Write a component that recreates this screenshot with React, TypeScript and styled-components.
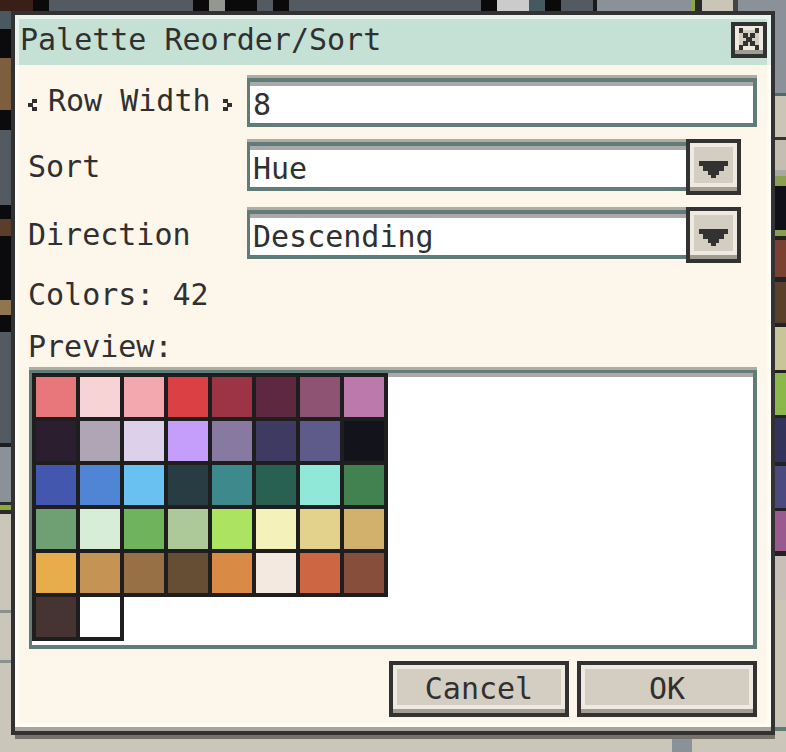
import React from "react";
import styled, { createGlobalStyle, css } from "styled-components";

const GlobalStyle = createGlobalStyle`
  html, body {
    margin: 0;
    padding: 0;
    background: #cbc6ba;
  }
  body {
    font-family: "DejaVu Sans Mono", "Liberation Mono", monospace;
  }
`;

// the app behind the dialog
const Desktop = styled.div`
  width: 786px;
  height: 752px;
  overflow: hidden;
  display: grid;
  grid-template-columns: 11px 764px 11px;
  grid-template-rows: 11px 728px 13px;
  grid-template-areas:
    "top top top"
    "left dlg right"
    "left bottom right";
  background: #cbc6ba;
`;

const Strip = styled.div<{ $area: string; $dir: "row" | "column" }>`
  grid-area: ${(p) => p.$area};
  display: flex;
  flex-direction: ${(p) => p.$dir};
  overflow: hidden;
`;

const Block = styled.div<{ $size: number; $color: string }>`
  flex: ${(p) => (p.$size > 0 ? `0 0 ${p.$size}px` : "1 1 auto")};
  background: ${(p) => p.$color};
`;

type Seg = [number, string];

const topSegs: Seg[] = [
  [33, "#3a1f18"], [16, "#0a0a0a"], [144, "#535a62"], [16, "#0a0a0a"],
  [16, "#949791"], [32, "#0a0a0a"], [16, "#535a62"], [16, "#0a0a0a"],
  [192, "#535a62"], [16, "#0a0a0a"], [32, "#cbcbcb"], [16, "#455a60"],
  [16, "#0a0a0a"], [32, "#535a62"], [4, "#1a1a1a"], [94, "#8a9199"],
  [4, "#8aaa40"], [7, "#2a2a2a"], [31, "#cbc5b8"], [5, "#444444"],
  [0, "#8a9199"],
];

const leftSegs: Seg[] = [
  [18, "#4a5860"], [29, "#0b0b0d"], [52, "#7d5e3e"], [20, "#0b0b0d"],
  [75, "#535a62"], [14, "#0b0b0d"], [17, "#5b3d2c"], [64, "#0b0b0d"],
  [15, "#8f7550"], [17, "#0b0b0d"], [111, "#535a62"], [4, "#1e1e1e"],
  [55, "#8a9199"], [3, "#2a2a2a"], [5, "#8aaa40"], [4, "#2a2a2a"],
  [96, "#cbc6ba"], [3, "#8a9190"], [47, "#cbc6ba"], [3, "#8a9190"],
  [0, "#cbc6ba"],
];

const rightSegs: Seg[] = [
  [82, "#8a9199"], [3, "#4a6a6a"], [41, "#cbc5b8"], [3, "#333333"],
  [30, "#c4beb2"], [6, "#a8a8a0"], [10, "#8aa050"], [44, "#101018"],
  [6, "#8aa050"], [4, "#222222"], [37, "#7a4030"], [5, "#222222"],
  [41, "#5a3f2a"], [4, "#222222"], [43, "#c8c59a"], [3, "#222222"],
  [42, "#8ab84a"], [3, "#222222"], [44, "#33325a"], [4, "#222222"],
  [42, "#4a4a80"], [3, "#222222"], [40, "#9a5a90"], [5, "#222222"],
  [44, "#c8c0b8"], [127, "#cbc5b8"], [4, "#5f7c79"], [0, "#cbc6ba"],
];

const bottomSegs: Seg[] = [
  [661, "#cbc6ba"], [20, "#8a9199"], [0, "#cbc6ba"],
];

// dialog chrome
const bevel = css`
  box-sizing: border-box;
  background: #d4cdc1;
  border: 4px solid #323232;
  box-shadow: inset 0 -4px 0 #a39c90, inset 0 -8px 0 #eeeae2,
    inset 4px 4px 0 #eeeae2, inset -4px 0 0 #eeeae2;
`;

const Dialog = styled.div`
  grid-area: dlg;
  height: 724px;
  box-sizing: border-box;
  border: 4px solid #323232;
  box-shadow: 4px 4px 0 #77736c;
  display: flex;
  flex-direction: column;
  color: #303030;
  font-family: "DejaVu Sans Mono", "Liberation Mono", monospace;
  font-size: 30px;
`;

const TitleBar = styled.div`
  flex: none;
  height: 50px;
  box-sizing: border-box;
  padding: 0 4px 0 5px;
  background: #c5e0d4;
  box-shadow: inset 4px 4px 0 #e9f3ee, inset -4px 0 0 #e9f3ee;
  display: flex;
  align-items: center;
  justify-content: space-between;
`;

const Title = styled.span`
  line-height: 40px;
  white-space: pre;
`;

const CloseButton = styled.div`
  ${bevel};
  width: 36px;
  height: 36px;
  display: flex;
  align-items: center;
  justify-content: center;
  padding-bottom: 2px;
`;

const Body = styled.div`
  flex: 1;
  box-sizing: border-box;
  padding: 10px 14px 14px 13px;
  background: #fdf6ea;
  box-shadow: inset 0 -4px 0 #a8a39a, inset 0 -8px 0 #fffcf6,
    inset 4px 0 0 #fffcf6, inset -4px 0 0 #fffcf6;
  display: flex;
  flex-direction: column;
  gap: 12px;
`;

const FormRow = styled.div`
  display: grid;
  grid-template-columns: 219px 1fr;
  align-items: center;
`;

const Label = styled.div`
  line-height: 40px;
  white-space: pre;
`;

const StepLabel = styled.div`
  display: flex;
  align-items: center;
  line-height: 40px;
  white-space: pre;
`;

const StepArrow = styled.svg<{ $gap: "left" | "right" }>`
  flex: none;
  margin-top: 8px;
  ${(p) => (p.$gap === "left" ? "margin-right: 11px;" : "margin-left: 12px;")}
`;

const Field = styled.div<{ $width?: number }>`
  box-sizing: border-box;
  height: 52px;
  border-top: 3px solid #b2aba0;
`;

const FieldBox = styled.div<{ $closed: boolean }>`
  box-sizing: border-box;
  height: 49px;
  padding: 4px 0 0 3px;
  background: #ffffff;
  border: 4px solid #5f7c79;
  border-left-width: 3px;
  border-right-width: ${(p) => (p.$closed ? 4 : 0)}px;
  box-shadow: inset 0 4px 0 #a9a9a9;
  line-height: 37px;
  white-space: pre;
`;

const Select = styled.div`
  width: 494px;
  display: grid;
  grid-template-columns: 1fr 55px;
  align-items: start;
`;

const DropButton = styled.div`
  ${bevel};
  height: 56px;
  padding-top: 4px;
  display: flex;
  align-items: center;
  justify-content: center;
`;

const PreviewSection = styled.div`
  display: flex;
  flex-direction: column;
`;

const PreviewBox = styled.div`
  box-sizing: border-box;
  height: 282px;
  margin-left: 1px;
  border-top: 3px solid #b2aba0;
`;

const PreviewInner = styled.div`
  box-sizing: border-box;
  height: 279px;
  background: #ffffff;
  border: 4px solid #5f7c79;
  border-top-width: 3px;
  border-left-width: 3px;
  box-shadow: inset 0 4px 0 #a9a9a9;
`;

const SwatchGrid = styled.div`
  width: fit-content;
  padding: 4px;
  display: grid;
  grid-template-columns: repeat(8, 40px);
  grid-auto-rows: 40px;
  gap: 4px;
`;

const Swatch = styled.div<{ $color: string }>`
  background: ${(p) => p.$color};
  box-shadow: 0 0 0 4px #1e1e1e;
`;

const Footer = styled.div`
  display: flex;
  justify-content: flex-end;
  gap: 8px;
`;

const Button = styled.div`
  ${bevel};
  width: 180px;
  height: 56px;
  line-height: 48px;
  text-align: center;
`;

const palette = [
  "#e8777b", "#f7d3d6", "#f3a7ae", "#da4044", "#9c3446", "#5e2940", "#8e5273", "#bc79ac",
  "#2a1e2f", "#afa5b5", "#ddd0ea", "#c59dfb", "#8879a0", "#3e3a61", "#5e5b8a", "#13131c",
  "#4357af", "#5085d6", "#69c1f2", "#273d43", "#3e898b", "#286052", "#90e8d8", "#428250",
  "#6ea074", "#d8edd8", "#6fb45d", "#adc99a", "#ace462", "#f4f1bb", "#e3d28b", "#d2b16d",
  "#e7ac4b", "#c59354", "#987045", "#664e35", "#d98a44", "#f4e9e0", "#cd6642", "#884e3c",
  "#463432", "#ffffff",
];

function CloseGlyph() {
  return (
    <svg width="20" height="22" viewBox="0 0 20 22" fill="#323232">
      <rect x="0" y="0" width="4" height="5" />
      <rect x="16" y="0" width="4" height="5" />
      <rect x="4" y="5" width="5" height="5" />
      <rect x="11" y="5" width="5" height="5" />
      <rect x="7" y="9" width="6" height="5" />
      <rect x="4" y="13" width="5" height="5" />
      <rect x="11" y="13" width="5" height="5" />
      <rect x="0" y="17" width="4" height="5" />
      <rect x="16" y="17" width="4" height="5" />
    </svg>
  );
}

function DownArrow() {
  return (
    <svg width="29" height="17" viewBox="0 0 29 17" fill="#323232">
      <rect x="0" y="0" width="29" height="5" />
      <rect x="4" y="5" width="21" height="5" />
      <rect x="9" y="10" width="11" height="4" />
      <rect x="12" y="14" width="5" height="3" />
    </svg>
  );
}

function Chevron({ side }: { side: "left" | "right" }) {
  const pts =
    side === "left"
      ? [[4, 0], [0, 4], [4, 8]]
      : [[0, 0], [4, 4], [0, 8]];
  return (
    <StepArrow $gap={side} width="9" height="12" viewBox="0 0 9 12" fill="#303030">
      {pts.map(([x, y]) => (
        <rect key={`${x}-${y}`} x={x} y={y} width="5" height="4" />
      ))}
    </StepArrow>
  );
}

function Dropdown({ value }: { value: string }) {
  return (
    <Select>
      <Field>
        <FieldBox $closed={false}>{value}</FieldBox>
      </Field>
      <DropButton>
        <DownArrow />
      </DropButton>
    </Select>
  );
}

function Strips({ area, dir, segs }: { area: string; dir: "row" | "column"; segs: Seg[] }) {
  return (
    <Strip $area={area} $dir={dir}>
      {segs.map(([size, color], i) => (
        <Block key={i} $size={size} $color={color} />
      ))}
    </Strip>
  );
}

export default function App() {
  return (
    <>
      <GlobalStyle />
      <Desktop>
        <Strips area="top" dir="row" segs={topSegs} />
        <Strips area="left" dir="column" segs={leftSegs} />
        <Dialog>
          <TitleBar>
            <Title>Palette Reorder/Sort</Title>
            <CloseButton>
              <CloseGlyph />
            </CloseButton>
          </TitleBar>
          <Body>
            <FormRow>
              <StepLabel>
                <Chevron side="left" />
                Row Width
                <Chevron side="right" />
              </StepLabel>
              <Field>
                <FieldBox $closed>8</FieldBox>
              </Field>
            </FormRow>
            <FormRow>
              <Label>Sort</Label>
              <Dropdown value="Hue" />
            </FormRow>
            <FormRow>
              <Label>Direction</Label>
              <Dropdown value="Descending" />
            </FormRow>
            <Label>Colors: 42</Label>
            <PreviewSection>
              <Label>Preview:</Label>
              <PreviewBox>
                <PreviewInner>
                  <SwatchGrid>
                    {palette.map((c, i) => (
                      <Swatch key={i} $color={c} />
                    ))}
                  </SwatchGrid>
                </PreviewInner>
              </PreviewBox>
            </PreviewSection>
            <Footer>
              <Button>Cancel</Button>
              <Button>OK</Button>
            </Footer>
          </Body>
        </Dialog>
        <Strips area="right" dir="column" segs={rightSegs} />
        <Strips area="bottom" dir="row" segs={bottomSegs} />
      </Desktop>
    </>
  );
}
